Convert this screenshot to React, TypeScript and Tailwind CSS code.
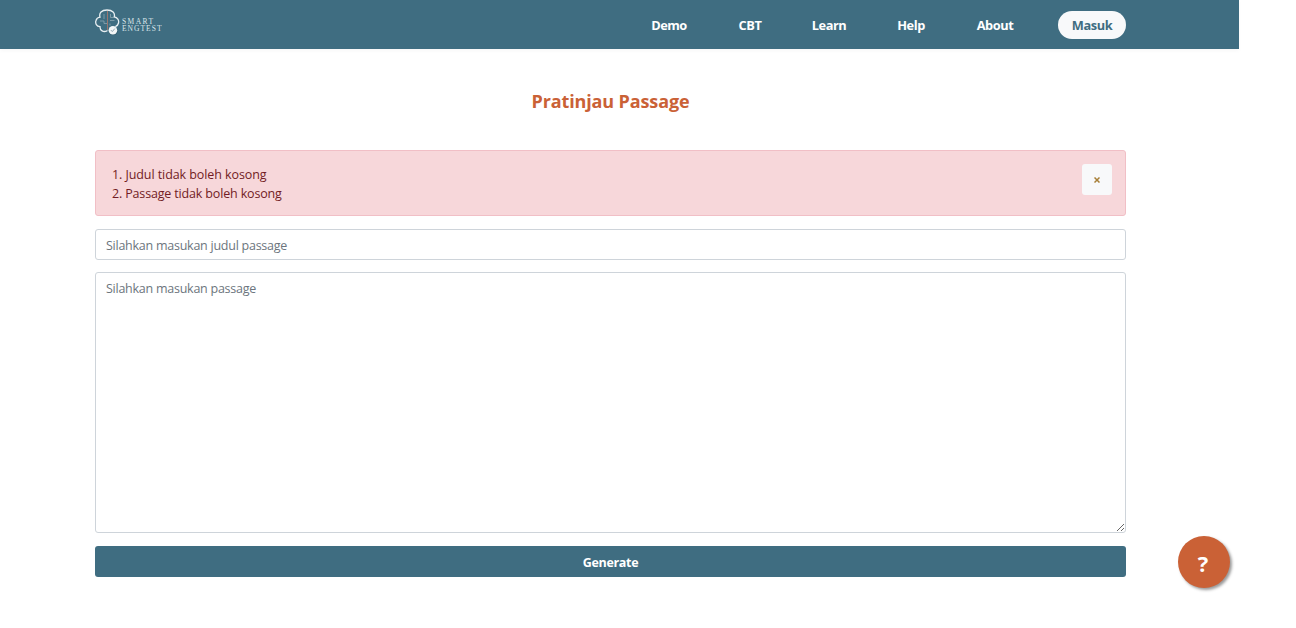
import React from "react";

const links = [
  { label: "Demo", box: "w-[36px] mr-[51px]" },
  { label: "CBT", box: "w-[24px] mr-[50px]" },
  { label: "Learn", box: "w-[34px] mr-[51px]" },
  { label: "Help", box: "w-[28px] mr-[51px]" },
  { label: "About", box: "w-[38px] mr-[44px]" },
];

function Logo() {
  return (
    <svg width="70" height="30" viewBox="0 0 70 30" fill="none" className="block">
      <path
        d="M12 25.800C8.500 27.600 4.800 25.600 5 21.600C1.500 21.300 0 18.500 1 15.500C1.600 13.500 3.200 12.400 5 12.200C3.800 8 6.500 5 12 5C17.500 5 20.400 8 19.200 12C22.500 12.400 24.200 15.300 23.500 18C23.100 19.700 22.200 20.800 20.800 21.400"
        stroke="#e8eff2"
        strokeWidth="1.300"
        strokeLinecap="round"
      />
      <path d="M12.500 6v19" stroke="#9a7770" strokeWidth="1" />
      <path d="M9 9v5M5 16h4v2.500h3M15.500 9v3.500h4M15 15.500h4.500M15 18.500v2" stroke="#8ba6b1" strokeWidth="0.800" />
      <circle cx="18.300" cy="26" r="4.500" fill="#28505f" opacity="0.400" />
      <circle cx="17.900" cy="25.200" r="4.300" fill="#f3f6f7" />
      <path d="M15.900 25.100l1.400 1.500 2.500-3" stroke="#93a9b3" strokeWidth="1" />
      <g fill="#dce6ea" fontFamily="'Liberation Serif', serif" fontSize="7.500">
        <text x="27" y="19.200" textLength="31" lengthAdjust="spacing">SMART</text>
        <text x="27" y="26.200" textLength="39.500" lengthAdjust="spacing">ENGTEST</text>
      </g>
    </svg>
  );
}

export default function App() {
  return (
    <div className="relative h-[628px] w-full overflow-hidden bg-white font-['Open_Sans','Noto_Sans',sans-serif] text-[12.5px]">
      <div className="w-[1239px]">
        <header className="flex h-[49px] items-center bg-[#3f6d81] pr-[113px] pl-[95px] shadow-[0_2px_4px_rgba(0,0,0,0.03)]">
          <div className="h-[40px]">
            <Logo />
          </div>
          <nav className="ml-auto flex items-center text-[12.8px] font-bold text-white">
            {links.map((link) => (
              <a key={link.label} className={`flex justify-center pt-[2px] tracking-[-0.45px] whitespace-nowrap ${link.box}`}>
                {link.label}
              </a>
            ))}
            <button className="flex h-[28px] w-[68px] items-center justify-center rounded-full bg-[#f8f9fa] pt-[3px] tracking-[-0.45px] text-[#3f6d81]">
              Masuk
            </button>
          </nav>
        </header>

        <main className="flex flex-col pr-[113px] pl-[95px]">
          <h1 className="mt-[38px] h-[28px] text-center text-[18px] leading-[28px] font-bold tracking-[-0.13px] text-[#ca6136]">
            Pratinjau Passage
          </h1>

          <div className="mt-[35px] flex h-[66px] justify-between rounded-[3px] border border-[#f1bfc6] bg-[#f7d7da] pt-[13px] pr-[13px] pl-[16px] leading-[19px] text-[#721c24]">
            <ol className="pt-px">
              <li className="tracking-[-0.08px]">1. Judul tidak boleh kosong</li>
              <li className="tracking-[-0.16px]">2. Passage tidak boleh kosong</li>
            </ol>
            <button className="flex h-[31px] w-[30px] items-center justify-center rounded-[3px] bg-[#f8f9fa] pt-px">
              <svg width="6" height="6" viewBox="0 0 6 6" stroke="#a77f36" strokeWidth="1.500">
                <path d="M0.500 0.500l5 5M5.500 0.500l-5 5" />
              </svg>
            </button>
          </div>

          <input
            className="mt-[13px] h-[31px] w-full rounded-[3px] border border-[#ced4da] bg-white px-[10px] pt-[2px] tracking-[-0.25px] outline-none placeholder:text-[#6c757d]"
            placeholder="Silahkan masukan judul passage"
          />
          <textarea
            className="mt-[12px] block h-[261px] w-full resize-y rounded-[3px] border border-[#ced4da] bg-white px-[10px] py-[6px] leading-[19px] tracking-[-0.25px] outline-none placeholder:text-[#6c757d]"
            placeholder="Silahkan masukan passage"
          />
          <button className="mt-[13px] flex h-[31px] items-center justify-center rounded-[3px] bg-[#3f6d81] pt-[3px] font-bold tracking-[-0.3px] text-white">
            Generate
          </button>
        </main>
      </div>

      <button className="absolute top-[536px] left-[1178px] flex size-[52px] items-center justify-center rounded-full bg-[#ca6136] pt-[2px] pr-[2px] text-[22px] font-bold text-white shadow-[2px_2px_3px_#999]">
        ?
      </button>
    </div>
  );
}
